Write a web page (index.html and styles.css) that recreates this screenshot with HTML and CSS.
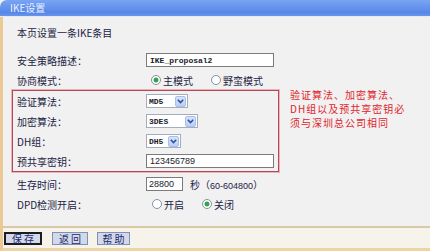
FILE: index.html
```html
<!DOCTYPE html>
<html lang="zh-CN">
<head>
<meta charset="utf-8">
<title>IKE设置</title>
<link rel="stylesheet" href="styles.css">
</head>
<body>
<div class="panel">
  <div class="title">IKE设置</div>
  <div class="content">
    <div class="form">
      <p class="intro">本页设置一条IKE条目</p>
      <div class="row">
        <span class="label">安全策略描述：</span>
        <span class="input wide mono">IKE_proposal2</span>
      </div>
      <div class="row">
        <span class="label">协商模式：</span>
        <span class="radios">
          <span class="opt first"><span class="radio on"></span>主模式</span>
          <span class="opt second"><span class="radio"></span>野蛮模式</span>
        </span>
      </div>
      <div class="group">
        <div class="box">
          <div class="row">
            <span class="label">验证算法：</span>
            <span class="select s-md5"><span class="val">MD5</span><span class="arrow"><svg width="7" height="5" viewBox="0 0 7 5"><path d="M0.8 0.8 L3.5 3.6 L6.2 0.8" fill="none" stroke="#2a4ea6" stroke-width="1.5"/></svg></span></span>
          </div>
          <div class="row">
            <span class="label">加密算法：</span>
            <span class="select s-3des"><span class="val">3DES</span><span class="arrow"><svg width="7" height="5" viewBox="0 0 7 5"><path d="M0.8 0.8 L3.5 3.6 L6.2 0.8" fill="none" stroke="#2a4ea6" stroke-width="1.5"/></svg></span></span>
          </div>
          <div class="row">
            <span class="label">DH组：</span>
            <span class="select s-dh"><span class="val">DH5</span><span class="arrow"><svg width="7" height="5" viewBox="0 0 7 5"><path d="M0.8 0.8 L3.5 3.6 L6.2 0.8" fill="none" stroke="#2a4ea6" stroke-width="1.5"/></svg></span></span>
          </div>
          <div class="row">
            <span class="label">预共享密钥：</span>
            <span class="input wide sans">123456789</span>
          </div>
        </div>
        <p class="note">验证算法、加密算法、<br>DH组以及预共享密钥必<br>须与深圳总公司相同</p>
      </div>
      <div class="row after">
        <span class="label">生存时间：</span>
        <span class="field">
          <span class="input short sans">28800</span>
          <span class="unit">秒（<span class="sans">60-604800</span>）</span>
        </span>
      </div>
      <div class="row">
        <span class="label">DPD检测开启：</span>
        <span class="radios">
          <span class="opt first dpd1"><span class="radio"></span>开启</span>
          <span class="opt dpd2"><span class="radio on"></span>关闭</span>
        </span>
      </div>
    </div>
    <div class="actions">
      <span class="btn save">保 存</span>
      <span class="btn back">返 回</span>
      <span class="btn help">帮 助</span>
    </div>
  </div>
</div>
</body>
</html>
```

FILE: styles.css
```css
* {
  box-sizing: border-box;
  margin: 0;
  padding: 0;
}

html, body {
  width: 430px;
  height: 251px;
  overflow: hidden;
}

body {
  background: #f1f1f0;
  font-family: "Noto Sans CJK SC", "Noto Sans", sans-serif;
  font-size: 10px;
  color: #1c2244;
}

.panel {
  height: 251px;
  display: flex;
  flex-direction: column;
}

.title {
  height: 17px;
  line-height: 16px;
  padding-left: 10px;
  color: #e9f0ff;
  font-size: 10px;
  background: linear-gradient(#7aa5f3, #5686e8 80%, #6b95ec);
  border-top-left-radius: 7px;
  border-bottom: 1px solid #e4e9f2;
}

.content {
  flex: 1;
  display: flex;
  flex-direction: column;
  border-left: 3px solid #ecc992;
  border-bottom: 3px solid #ecd4a6;
}

.form {
  height: 209px;
  padding: 9px 0 0 14px;
  background: #f1f1f1;
}

.intro {
  height: 14px;
  line-height: 14px;
  margin-bottom: 10px;
}

.row {
  display: grid;
  grid-template-columns: 129px auto;
  align-items: center;
  height: 20px;
}

.label {
  white-space: nowrap;
}

.input {
  display: flex;
  align-items: center;
  height: 14px;
  background: #fff;
  border: 1px solid #7b7b7b;
  padding-left: 3px;
  color: #1a1a2a;
}

.wide {
  width: 128px;
}

.short {
  width: 37px;
  padding-left: 2px;
}

.mono {
  font-family: "Liberation Mono", monospace;
  font-weight: bold;
  font-size: 8px;
}

.sans {
  font-family: "Liberation Sans", Arial, sans-serif;
  font-size: 9px;
}

.radios {
  display: flex;
  align-items: center;
}

.opt {
  display: flex;
  align-items: center;
  gap: 2px;
}

.opt.first {
  margin-left: 5px;
  width: 60px;
}

.opt.dpd1 {
  margin-left: 6px;
  width: 50px;
}

.radio {
  width: 10px;
  height: 10px;
  border: 1px solid #8492a6;
  border-radius: 50%;
  background: #fff;
}

.radio.on {
  background: radial-gradient(circle, #34a548 0 2.2px, #fff 2.8px);
}

.group {
  display: flex;
  align-items: flex-start;
  margin-left: -5px;
}

.box {
  width: 267px;
  padding-left: 4px;
  border: 1px solid #b7465a;
  box-shadow: 0 0 0 1px #eab3ba;
}

.note {
  margin-left: 11px;
  margin-top: -2px;
  font-size: 10px;
  line-height: 14px;
  letter-spacing: 1px;
  white-space: nowrap;
  color: #e0242c;
}

.select {
  display: flex;
  align-items: center;
  height: 14px;
  background: #fff;
  border: 1px solid #a3adc2;
  padding: 0 1px 0 2px;
}

.select .val {
  font-family: "Liberation Mono", monospace;
  font-weight: bold;
  font-size: 8px;
  color: #1a1a2a;
}

.select .arrow {
  margin-left: auto;
  width: 11px;
  height: 11px;
  border-radius: 2px;
  background: linear-gradient(#d6e2fa, #bccff4);
  border: 1px solid #aabfe8;
  display: flex;
  align-items: center;
  justify-content: center;
}

.s-md5 { width: 42px; }
.s-3des { width: 52px; }
.s-dh { width: 35px; }

.row.after {
  margin-top: 2px;
}

.field {
  display: flex;
  align-items: center;
}

.unit {
  margin-left: 7px;
  white-space: nowrap;
}

.actions {
  flex: 1;
  display: flex;
  align-items: flex-start;
  padding: 4px 0 0 1px;
  background: #f6f3ea;
  border-top: 2px solid #d9c9a6;
}

.btn {
  display: flex;
  align-items: center;
  justify-content: center;
  height: 13px;
  background: #d3d9ea;
  border: 1px solid #8290b4;
  color: #1b2a6a;
  font-size: 10px;
  white-space: pre;
}

.btn.save {
  width: 38px;
  border: 2px solid #1c1c24;
}

.btn.back {
  width: 36px;
  margin-left: 10px;
}

.btn.help {
  width: 33px;
  margin-left: 9px;
}
```
